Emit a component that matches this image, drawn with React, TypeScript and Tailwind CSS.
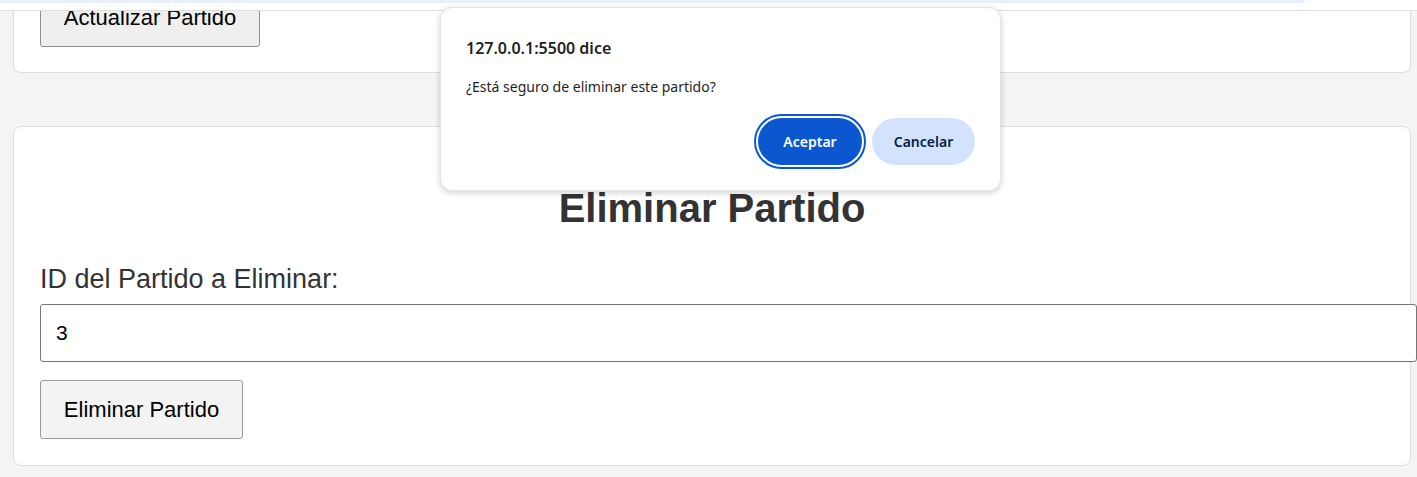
import React from 'react';

function ConfirmDialog() {
  return (
    <div className="absolute left-[440px] top-[7px] z-20 w-[561px] h-[184px] rounded-[12px] border border-[#e3e3e3] bg-white shadow-[0_2px_6px_rgba(0,0,0,0.18)] px-[25px] pt-[27px] font-['Noto_Sans',sans-serif]">
      <div className="text-[16px] font-semibold leading-[26px] text-[#1f1f1f]">127.0.0.1:5500 dice</div>
      <div className="mt-[16px] text-[14px] leading-[20px] text-[#1f1f1f]">¿Está seguro de eliminar este partido?</div>
      <div className="mt-[21px] flex justify-end gap-[10px]">
        <button
          type="button"
          className="h-[47px] w-[104px] rounded-full bg-[#0b57d0] text-[14px] font-semibold text-white outline-2 outline-offset-2 outline-[#0b57d0]"
        >
          Aceptar
        </button>
        <button type="button" className="h-[47px] w-[103px] rounded-full bg-[#d3e3fd] text-[14px] font-semibold text-[#041e49]">
          Cancelar
        </button>
      </div>
    </div>
  );
}

export default function App() {
  return (
    <div className="relative h-[477px] w-[1417px] overflow-hidden bg-[#f4f4f4] font-['Liberation_Sans',Arial,sans-serif] text-[#333]">
      <div className="relative z-10 h-[11px] border-b border-[#e0e0e0] bg-white">
        <div className="h-[3px] w-[1305px] rounded-br-full bg-[#e9f0fb]" />
      </div>

      <div className="pl-[13px] pr-[6px]">
        {/* card above, scrolled mostly out of view */}
        <div className="-mt-[44px] rounded-[8px] border border-[#dddddd] bg-white px-[26px] pb-[25px] pt-[20px]">
          <button
            type="button"
            className="h-[59px] w-[220px] rounded-[3px] border border-[#8f8f8f] bg-[#efefef] text-[22px] text-black"
          >
            Actualizar Partido
          </button>
        </div>

        <div className="mt-[53px] rounded-[8px] border border-[#dddddd] bg-white pb-[26px] pl-[26px] pr-[26px] pt-[58px]">
          <h2 className="text-center text-[40px] font-bold leading-[46px] text-[#333]">Eliminar Partido</h2>
          <label className="mt-[33px] block text-[27px] leading-[31px] text-[#333]">ID del Partido a Eliminar:</label>
          <input
            type="text"
            defaultValue="3"
            className="mt-[9px] block h-[58px] w-[1377px] max-w-none rounded-[3px] border border-[#767676] bg-white px-[15px] text-[21px] text-black outline-none"
          />
          <button
            type="button"
            className="mt-[18px] h-[59px] w-[203px] rounded-[3px] border border-[#9a9a9a] bg-[#f3f3f3] text-[22px] text-black"
          >
            Eliminar Partido
          </button>
        </div>
      </div>

      <ConfirmDialog />
    </div>
  );
}
